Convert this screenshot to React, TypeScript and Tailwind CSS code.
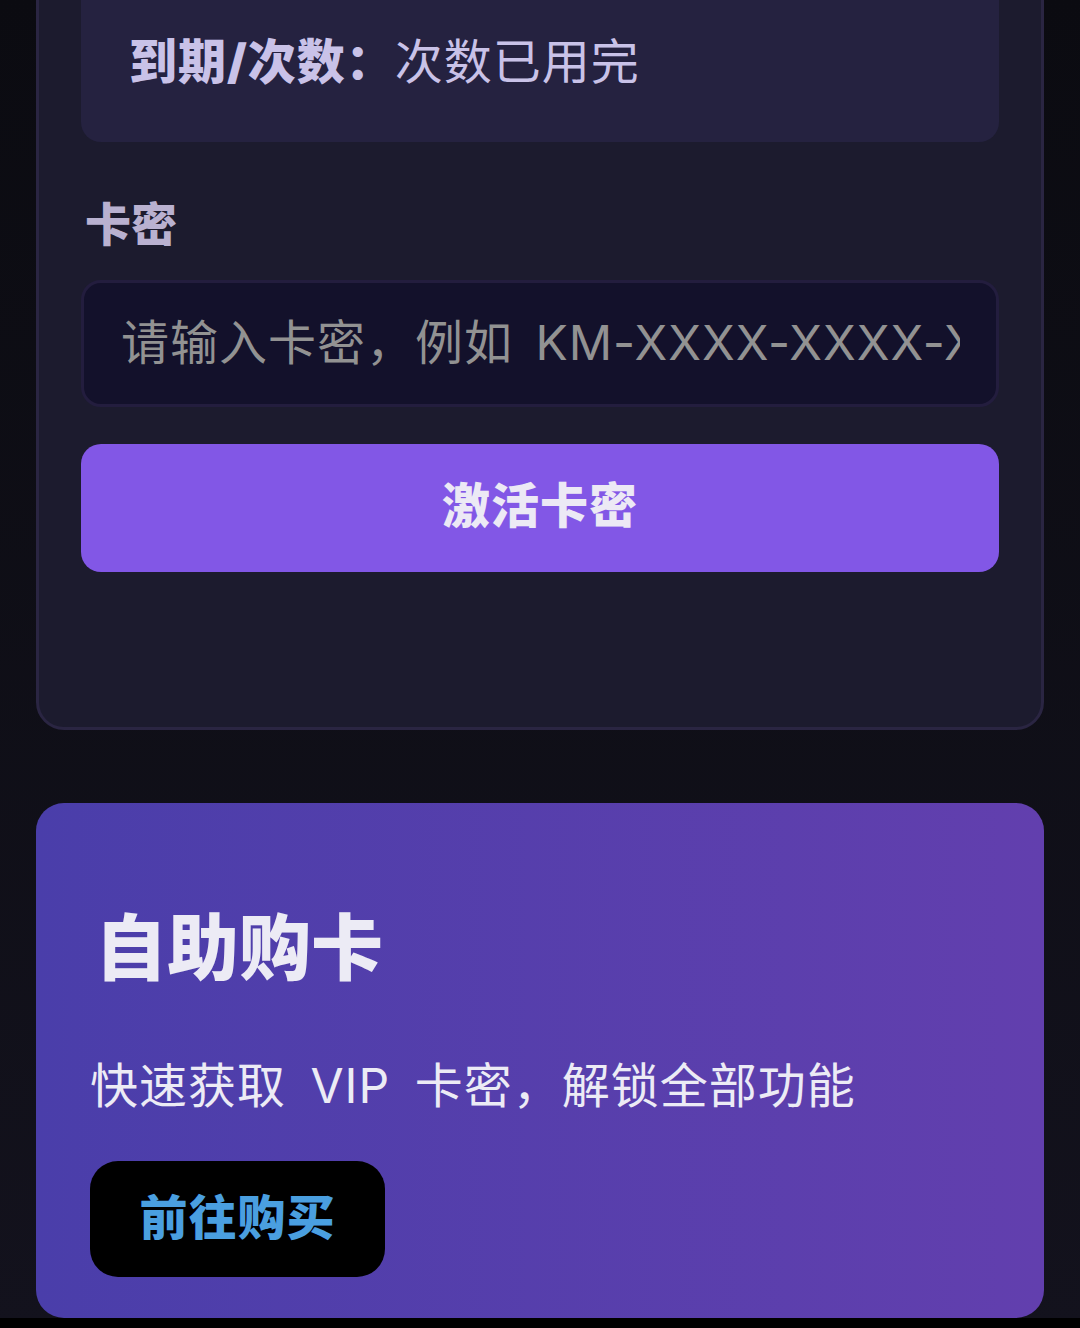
export default function App() {
  const font = { fontFamily: 'Inter, "Noto Sans CJK SC", "Noto Sans", sans-serif' };

  return (
    <div
      style={font}
      className="h-[1328px] w-[1080px] overflow-hidden bg-gradient-to-b from-[#0b0b11] to-[#13121d]"
    >
      <div className="h-[1318px] overflow-hidden px-9">
        {/* 卡密激活 */}
        <section className="-mt-10 h-[770px] rounded-b-[28px] border-[3px] border-[#2a2542] bg-[#1c1b2e] px-[42px] pt-0">
          <div className="flex h-[179px] items-end rounded-b-[20px] bg-[#252240] pb-[50px] pl-[48px]">
            <p className="text-[48px] leading-[60px] tracking-[1px] text-[#c9c2e8]">
              <span className="font-black">到期/次数：</span>次数已用完
            </p>
          </div>

          <label className="mt-[52px] block pl-1 text-[46px] leading-[60px] font-black text-[#b9b1d0]">
            卡密
          </label>

          <input
            readOnly
            placeholder="请输入卡密，例如 KM-XXXX-XXXX-XXXX"
            className="mt-[26px] block h-[127px] w-full rounded-[20px] border-[3px] border-[#231d3e] bg-[#13112b] pr-[36px] pb-[2px] pl-[37px] text-[48px] tracking-[1px] text-white outline-none [word-spacing:8px] placeholder:text-[#929292]"
          />

          <button className="mt-[37px] flex h-[128px] w-full items-center justify-center rounded-[20px] bg-[#8257e6] pb-[4px] text-[48px] font-black tracking-[1px] text-[#ece9f5]">
            激活卡密
          </button>
        </section>

        {/* 自助购卡 */}
        <section className="mt-[73px] h-[515px] rounded-[28px] bg-gradient-to-r from-[#4a3eaa] to-[#623fae] pt-[105px] pl-[54px]">
          <h2 className="pl-[5px] text-[72px] leading-[80px] font-black text-[#ecebf5]">自助购卡</h2>
          <p className="mt-[68px] text-[48px] leading-[60px] tracking-[1px] text-[#ecebf5] [word-spacing:10px]">
            快速获取 VIP 卡密，解锁全部功能
          </p>
          <button className="mt-[45px] flex h-[116px] w-[295px] items-center justify-center rounded-[28px] bg-black pb-[2px] text-[48px] font-black tracking-[1px] text-[#4a9fe0]">
            前往购买
          </button>
        </section>
      </div>
      <div className="h-[10px] bg-black" />
    </div>
  );
}
